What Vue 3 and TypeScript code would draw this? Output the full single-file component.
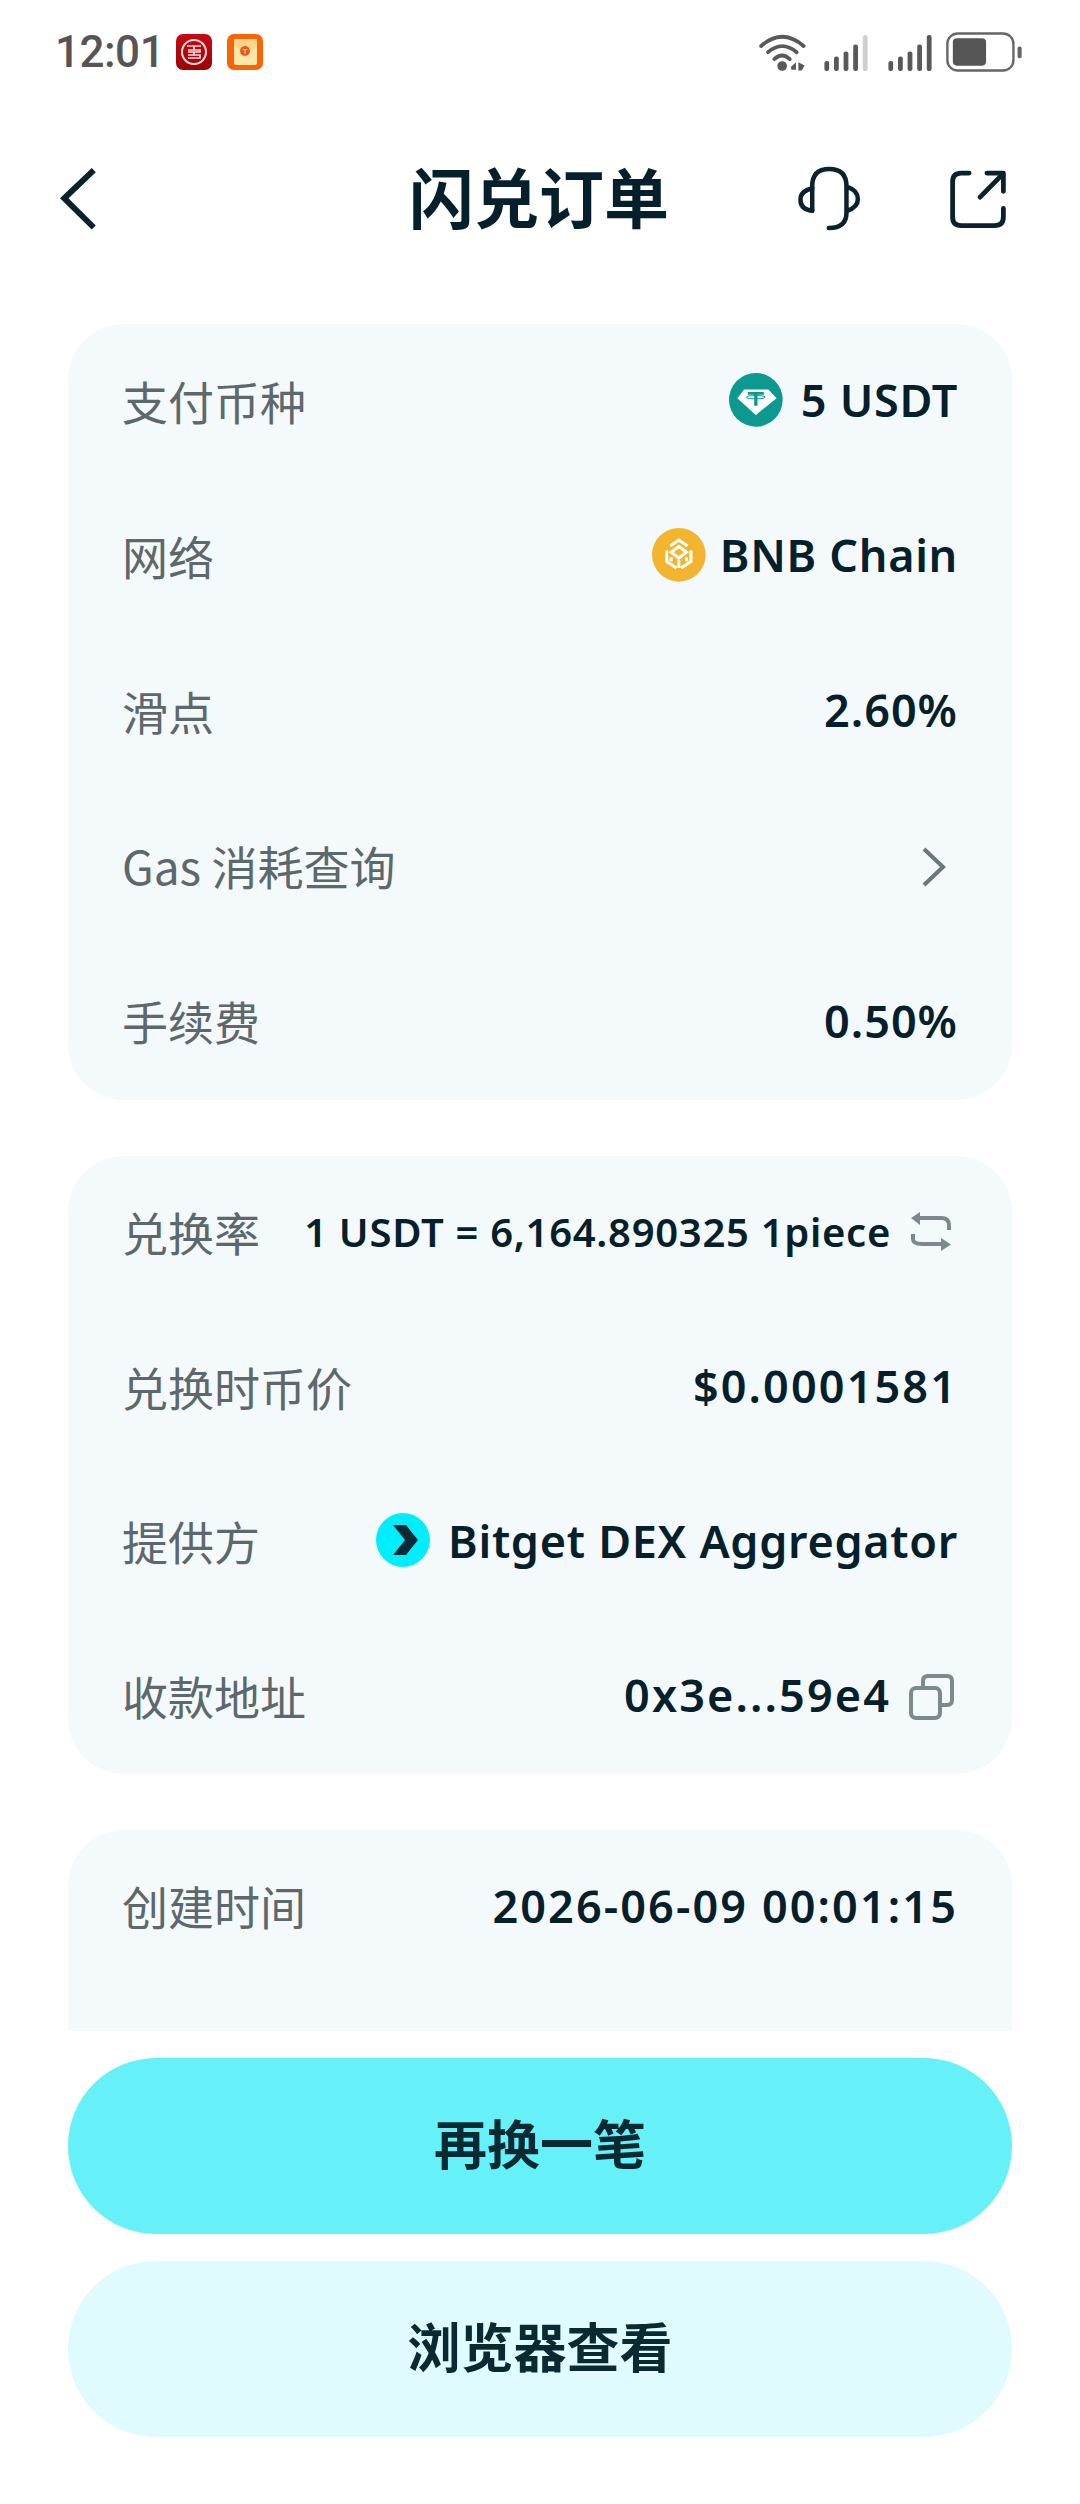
<script setup lang="ts">
interface Row {
  label: string;
  value?: string;
  icon?: "tether" | "bnb" | "bitget";
  tail?: "chevron" | "swap" | "copy";
  small?: boolean;
  track?: "s" | "m" | "l";
}

const cards: Row[][] = [
  [
    { label: "支付币种", value: "5 USDT", icon: "tether", track: "s" },
    { label: "网络", value: "BNB Chain", icon: "bnb", track: "s" },
    { label: "滑点", value: "2.60%", track: "m" },
    { label: "Gas 消耗查询", tail: "chevron" },
    { label: "手续费", value: "0.50%", track: "m" },
  ],
  [
    { label: "兑换率", value: "1 USDT = 6,164.890325 1piece", tail: "swap", small: true, track: "s" },
    { label: "兑换时币价", value: "$0.0001581", track: "l" },
    { label: "提供方", value: "Bitget DEX Aggregator", icon: "bitget", track: "s" },
    { label: "收款地址", value: "0x3e...59e4", tail: "copy", track: "l" },
  ],
  [{ label: "创建时间", value: "2026-06-09 00:01:15", track: "l" }],
];

const signalBars = [
  { x: 0, y: 76, h: 29 },
  { x: 28, y: 63, h: 42 },
  { x: 56, y: 48, h: 57 },
  { x: 84, y: 28, h: 77 },
  { x: 112, y: 0, h: 105 },
];
</script>

<template>
  <div class="page">
    <div class="status">
      <div class="status__left">
        <span class="status__time">12:01</span>
        <svg class="app-icon" viewBox="0 0 36 36">
          <defs>
            <linearGradient id="bank" x1="0" y1="0" x2="0" y2="1">
              <stop offset="0" stop-color="#c70a14" />
              <stop offset="1" stop-color="#9c0208" />
            </linearGradient>
          </defs>
          <rect width="36" height="36" rx="7" fill="url(#bank)" />
          <circle cx="18" cy="18" r="12" fill="none" stroke="#f6dcdc" stroke-width="2" />
          <path d="M11 12H25M18 12V16M12 16H24V18H12M12 21H24V24H12M18 18V21" fill="none" stroke="#f6dcdc" stroke-width="1.7" />
        </svg>
        <svg class="app-icon" viewBox="0 0 36 36">
          <rect width="36" height="36" rx="7" fill="#f8640a" />
          <rect x="7" y="5" width="23" height="26" rx="2" fill="#ffe7a8" />
          <path d="M7 12Q18 21 30 12V5H7Z" fill="#fbd58a" />
          <circle cx="18" cy="17" r="5" fill="#f0571a" />
          <path d="M15.8 15.5H20.2M18 15.5V19.5" stroke="#ffe7a8" stroke-width="1" />
        </svg>
      </div>
      <div class="status__right">
        <svg class="wifi" viewBox="630 95 145 115">
          <g fill="none" stroke="#595959" stroke-linecap="round">
            <path d="M642 135Q703 82 765 135" stroke-width="11" />
            <path d="M662 153Q703 118 745 153" stroke-width="11" />
            <path d="M680 173Q703 152 725 173" stroke-width="11" />
          </g>
          <circle cx="703" cy="193" r="14" fill="#595959" />
          <path d="M728 196L743 182V204H730ZM750 182L768 192L760 206H750Z" fill="#595959" />
        </svg>
        <svg class="signal" viewBox="0 0 126 105">
          <rect
            v-for="(b, i) in signalBars"
            :key="i"
            :x="b.x"
            :y="b.y"
            width="14"
            :height="b.h"
            rx="6"
            :fill="i === 4 ? '#cfcfcf' : '#595959'"
          />
        </svg>
        <svg class="signal" viewBox="0 0 126 105">
          <rect
            v-for="(b, i) in signalBars"
            :key="i"
            :x="b.x"
            :y="b.y"
            width="14"
            :height="b.h"
            rx="6"
            fill="#595959"
          />
        </svg>
        <svg class="battery" viewBox="1177 96 222 116">
          <rect x="1181" y="100" width="193" height="108" rx="30" fill="none" stroke="#666" stroke-width="7" />
          <rect x="1197" y="114" width="97" height="80" rx="12" fill="#555" />
          <rect x="1386" y="138" width="12" height="34" rx="5" fill="#666" />
        </svg>
      </div>
    </div>

    <header class="nav">
      <div class="nav__side">
        <svg class="nav__back" viewBox="170 500 115 190">
          <path d="M270 512L185 593L270 677" fill="none" stroke="#0a222b" stroke-width="17" />
        </svg>
      </div>
      <h1 class="nav__title">闪兑订单</h1>
      <div class="nav__side nav__side--right">
        <svg class="nav__headset" viewBox="750 505 185 190">
          <g fill="none" stroke="#0a222b" stroke-width="13" stroke-linecap="round" stroke-linejoin="round">
            <path d="M794 634V563Q794 513 843 513Q893 513 893 563V640Q893 684 842 684" />
            <path d="M794 569Q760 577 760 602Q760 630 794 634" />
            <path d="M895 565Q926 575 926 600Q926 624 895 634" />
          </g>
        </svg>
        <svg class="nav__share" viewBox="1190 513 168 172">
          <g fill="none" stroke="#0a222b" stroke-width="14" stroke-linecap="round" stroke-linejoin="round">
            <path d="M1248 522H1225Q1200 522 1200 547V650Q1200 675 1225 675H1322Q1348 675 1348 650V625" />
            <path d="M1280 592L1346 525M1300 522H1348V575" />
          </g>
        </svg>
      </div>
    </header>

    <main class="list">
      <section
        v-for="(rows, c) in cards"
        :key="c"
        class="card"
        :class="{ 'card--cut': c === 2 }"
      >
        <div v-for="row in rows" :key="row.label" class="row">
          <span class="row__label">{{ row.label }}</span>
          <div
            class="row__value"
            :class="[row.small ? 'row__value--small' : '', row.track ? `track-${row.track}` : '']"
          >
            <svg v-if="row.icon === 'tether'" class="coin" viewBox="388 108 161 161">
              <circle cx="468" cy="188" r="80" fill="#0c9a90" />
              <path d="M433 157H505L530 183L468 233L413 183Z" fill="#fff" />
              <path d="M444 165H492V173H473V206H463V173H444Z" fill="#0c9a90" />
              <ellipse cx="468" cy="180" rx="27" ry="5" fill="none" stroke="#0c9a90" stroke-width="3" />
            </svg>
            <svg v-else-if="row.icon === 'bnb'" class="coin coin--bnb" viewBox="159 573 161 161">
              <circle cx="239" cy="653" r="80" fill="#f3b52f" />
              <g fill="none" stroke="#fff" stroke-width="9">
                <path d="M239 628L262 645L239 662L216 645Z" />
                <path d="M213 627L239 609L265 627M203 640V673L232 692M275 640V673L246 692M239 668V692" />
                <path d="M216 660V672M262 660V672" />
              </g>
            </svg>
            <svg v-else-if="row.icon === 'bitget'" class="coin" viewBox="0 0 54 54">
              <circle cx="27" cy="27" r="27" fill="#00eefc" />
              <path d="M17 12H30L42 27L30 42H17L29 27Z" fill="#0b2a38" />
            </svg>
            <span v-if="row.value">{{ row.value }}</span>
            <svg v-if="row.tail === 'chevron'" class="tail-chevron" viewBox="0 0 26 42">
              <path d="M3 3L22 21L3 39" fill="none" stroke="#6a787c" stroke-width="4" />
            </svg>
            <svg v-if="row.tail === 'swap'" class="tail-icon" viewBox="0 0 41 41">
              <g fill="none" stroke="#7c8a8d" stroke-width="4">
                <path d="M9 7H30Q38 7 38 14V19" />
                <path d="M2 23V28Q2 33 11 33H30" />
              </g>
              <path d="M0 7L9 1V14ZM30 27L40 33.5L30 40Z" fill="#7c8a8d" />
            </svg>
            <svg v-if="row.tail === 'copy'" class="tail-icon tail-icon--copy" viewBox="0 0 46 46">
              <g fill="none" stroke="#7c8a8d" stroke-width="4">
                <path d="M14 12V7Q14 2 19 2H38Q43 2 43 7V26Q43 31 38 31H32" />
                <rect x="2" y="14" width="29" height="30" rx="5" />
              </g>
            </svg>
          </div>
        </div>
      </section>
    </main>

    <footer class="actions">
      <button class="btn btn--primary">再换一笔</button>
      <button class="btn btn--light">浏览器查看</button>
    </footer>
  </div>
</template>

<style>
html,
body {
  margin: 0;
  background: #fff;
}
</style>

<style scoped>
.page {
  width: 1080px;
  height: 2504px;
  display: flex;
  flex-direction: column;
  background: #fff;
  overflow: hidden;
  font-family: "Noto Sans", "Noto Sans CJK SC", sans-serif;
  color: #05202b;
}
.status {
  height: 106px;
  flex-shrink: 0;
  display: flex;
  justify-content: space-between;
  align-items: center;
  padding: 0 58px 2px 55px;
  box-sizing: border-box;
}
.status__left {
  display: flex;
  align-items: center;
  gap: 15px;
}
.status__time {
  font-family: Roboto, sans-serif;
  font-size: 44px;
  font-weight: 500;
  letter-spacing: -0.5px;
  color: #555;
  margin-right: -3px;
}
.app-icon {
  width: 36px;
  height: 36px;
}
.status__right {
  display: flex;
  align-items: center;
  gap: 20px;
}
.wifi {
  width: 50px;
  height: 40px;
  margin-right: -3px;
}
.signal {
  width: 44px;
  height: 36px;
  margin-top: 2px;
}
.battery {
  width: 76px;
  height: 40px;
  margin-left: -6px;
}
.nav {
  height: 186px;
  flex-shrink: 0;
  display: grid;
  grid-template-columns: 1fr auto 1fr;
  align-items: center;
  padding: 0 73px 0 59px;
  box-sizing: border-box;
}
.nav__side {
  display: flex;
  align-items: center;
}
.nav__side--right {
  justify-content: flex-end;
  gap: 88px;
}
.nav__back {
  width: 40px;
  height: 66px;
}
.nav__headset {
  width: 64px;
  height: 66px;
}
.nav__share {
  width: 58px;
  height: 59px;
}
.nav__title {
  margin: 0 0 8px;
  font-family: "Noto Sans CJK SC", sans-serif;
  font-size: 65px;
  font-weight: 700;
  line-height: 1;
  color: #05202b;
  transform: translateX(6px);
}
.list {
  height: 1739px;
  flex-shrink: 0;
  box-sizing: border-box;
  padding: 32px 68px 0;
  display: flex;
  flex-direction: column;
  gap: 56px;
  overflow: hidden;
}
.card {
  flex-shrink: 0;
  background: #f4f9fb;
  border-radius: 56px;
  padding: 0 54px;
}
.card--cut {
  min-height: 400px;
}
.row {
  height: 154.5px;
  box-sizing: border-box;
  padding-bottom: 4px;
  display: flex;
  justify-content: space-between;
  align-items: center;
}
.card:first-child .row {
  height: 155.2px;
}
.row__label {
  font-family: "Noto Sans CJK SC", sans-serif;
  font-size: 46px;
  font-weight: 400;
  color: #5d686c;
}
.row__value {
  display: flex;
  align-items: center;
  gap: 18px;
  font-size: 45px;
  font-weight: 600;
  white-space: nowrap;
}
.row__value--small {
  font-size: 40px;
  gap: 20px;
}
.track-s {
  letter-spacing: 0.7px;
}
.track-m {
  letter-spacing: 1px;
}
.track-l {
  letter-spacing: 2.1px;
}
.coin {
  width: 54px;
  height: 54px;
}
.coin--bnb {
  margin-right: -4px;
}
.tail-chevron {
  width: 26px;
  height: 42px;
  margin: 4px 11px 0 0;
}
.tail-icon {
  width: 41px;
  height: 41px;
  margin-right: 6px;
}
.tail-icon--copy {
  width: 46px;
  height: 46px;
  margin: 4px 3px 0 0;
}
.actions {
  flex-shrink: 0;
  padding: 27px 68px 0;
  display: flex;
  flex-direction: column;
  gap: 27px;
}
.btn {
  height: 176px;
  border: 0;
  border-radius: 88px;
  padding: 0 0 8px;
  font-family: "Noto Sans CJK SC", sans-serif;
  font-size: 53px;
  font-weight: 700;
  color: #0a2a33;
}
.btn--primary {
  background: #66f0f7;
}
.btn--light {
  background: #e0fbfd;
}
</style>
